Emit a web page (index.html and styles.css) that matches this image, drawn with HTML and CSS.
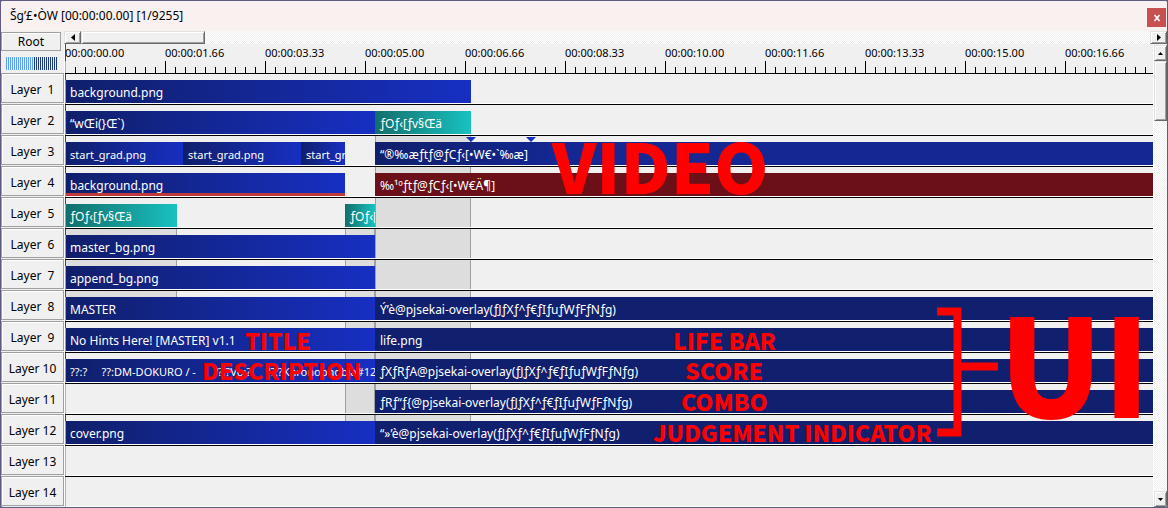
FILE: index.html
```html
<!DOCTYPE html>
<html lang="en">
<head>
<meta charset="utf-8">
<title>Timeline</title>
<link rel="stylesheet" href="styles.css">
</head>
<body>
<div class="window">
  <header class="titlebar">
    <span class="title">Šg’£•ÒW [00:00:00.00] [1/9255]</span>
    <button class="close" aria-label="Close"><svg width="8" height="8" viewBox="0 0 8 8"><path d="M1.500 1L6.500 7M6.500 1L1.500 7" stroke="#fff" stroke-width="1.600"/></svg></button>
  </header>
  <div class="body">
    <aside class="side">
      <button class="root">Root</button>
      <div class="zoombar"></div>
      <button class="layer">Layer  1</button>
      <button class="layer">Layer  2</button>
      <button class="layer">Layer  3</button>
      <button class="layer">Layer  4</button>
      <button class="layer">Layer  5</button>
      <button class="layer">Layer  6</button>
      <button class="layer">Layer  7</button>
      <button class="layer">Layer  8</button>
      <button class="layer">Layer  9</button>
      <button class="layer">Layer 10</button>
      <button class="layer">Layer 11</button>
      <button class="layer">Layer 12</button>
      <button class="layer">Layer 13</button>
      <button class="layer">Layer 14</button>
    </aside>
    <main class="main">
      <div class="hscroll">
        <button class="sb sb-h" aria-label="Scroll left"><svg width="4" height="7" viewBox="0 0 4 7"><path d="M4 0v7L0 3.500z"/></svg></button>
        <div class="thumb-h"></div>
        <button class="sb sb-h end-h" aria-label="Scroll right"><svg width="4" height="7" viewBox="0 0 4 7"><path d="M0 0v7L4 3.500z"/></svg></button>
      </div>
      <div class="content">
        <div class="timeline">
          <div class="ruler">
            <span>00:00:00.00</span><span>00:00:01.66</span><span>00:00:03.33</span><span>00:00:05.00</span><span>00:00:06.66</span><span>00:00:08.33</span><span>00:00:10.00</span><span>00:00:11.66</span><span>00:00:13.33</span><span>00:00:15.00</span><span>00:00:16.66</span>
          </div>
          <div class="lanes">
            <div class="row"><i class="cur"></i><div class="clip blue intro-fade">background.png</div></div>
            <div class="row"><i class="cur"></i><div class="clip blue intro">“wŒi(}Œ`)</div><div class="clip teal fade">ƒOƒ‹[ƒv§Œä</div></div>
            <div class="row"><i class="cur"></i><i class="band b3"></i><div class="clip blue compact s1">start_grad.png</div><div class="clip blue compact s2">start_grad.png</div><div class="clip blue compact s3">start_grad.png</div><div class="clip video rest">“®‰æƒtƒ@ƒCƒ‹[•W€•`‰æ]</div>
              <svg class="key" width="70" height="5" viewBox="0 0 70 5"><path d="M0 0h10L5 5zM60 0h10L65 5z" fill="#1730c0"/></svg></div>
            <div class="row"><i class="cur"></i><i class="band b3"></i><div class="clip blue s123 selected">background.png</div><div class="clip audio rest">‰¹ºƒtƒ@ƒCƒ‹[•W€Ä¶]</div></div>
            <div class="row"><i class="cur"></i><i class="band b3"></i><div class="clip teal g1">ƒOƒ‹[ƒv§Œä</div><div class="clip teal g2">ƒOƒ‹[ƒv§Œä</div></div>
            <div class="row"><i class="cur"></i><i class="band b1"></i><i class="band b2"></i><i class="band b3"></i><div class="clip blue intro">master_bg.png</div></div>
            <div class="row"><i class="cur"></i><i class="band b1"></i><i class="band b2"></i><i class="band b3"></i><div class="clip blue intro">append_bg.png</div></div>
            <div class="row"><i class="cur"></i><i class="band b1"></i><i class="band b2"></i><i class="band b3"></i><div class="clip blue intro">MASTER</div><div class="clip navy rest">Ý’è@pjsekai-overlay(ƒJƒXƒ^ƒ€ƒIƒuƒWƒFƒNƒg)</div></div>
            <div class="row"><i class="cur"></i><i class="band b2"></i><i class="band b3"></i><div class="clip blue intro">No Hints Here! [MASTER] v1.1</div><div class="clip navy rest">life.png</div></div>
            <div class="row"><i class="cur"></i><i class="band b2"></i><i class="band b3"></i><div class="clip blue compact intro">??:?     ??:DM-DOKURO / -      ??:?Vo:?     ??:?Khronophobia#12</div><div class="clip navy rest">ƒXƒRƒA@pjsekai-overlay(ƒJƒXƒ^ƒ€ƒIƒuƒWƒFƒNƒg)</div></div>
            <div class="row"><i class="cur idle"></i><i class="band b2"></i><i class="band b3"></i><div class="clip navy rest">ƒRƒ“ƒ{@pjsekai-overlay(ƒJƒXƒ^ƒ€ƒIƒuƒWƒFƒNƒg)</div></div>
            <div class="row"><i class="cur"></i><i class="band b2"></i><i class="band b3"></i><div class="clip blue intro">cover.png</div><div class="clip navy rest">“»’è@pjsekai-overlay(ƒJƒXƒ^ƒ€ƒIƒuƒWƒFƒNƒg)</div></div>
            <div class="row"><i class="cur idle"></i></div>
            <div class="row"><i class="cur idle"></i></div>
            <div class="note large n-video">VIDEO</div>
            <div class="note n-title">TITLE</div>
            <div class="note n-desc">DESCRIPTION</div>
            <div class="note n-life">LIFE BAR</div>
            <div class="note n-score">SCORE</div>
            <div class="note n-combo">COMBO</div>
            <div class="note n-judge">JUDGEMENT INDICATOR</div>
            <svg class="bracket" width="61" height="130" viewBox="0 0 61 130"><path d="M0 4.500H20.500V125.500H0M20.500 59.500H61" fill="none" stroke="#f00" stroke-width="8"/></svg>
            <div class="note huge n-ui">UI</div>
          </div>
        </div>
        <div class="vscroll">
          <button class="sb sb-v" aria-label="Scroll up"><svg width="5" height="3" viewBox="0 0 5 3"><path d="M0 3h5L2.500 0z"/></svg></button>
          <div class="thumb-v"></div>
          <button class="sb sb-v end-v" aria-label="Scroll down"><svg width="5" height="3" viewBox="0 0 5 3"><path d="M0 0h5L2.500 3z"/></svg></button>
        </div>
      </div>
    </main>
  </div>
</div>
</body>
</html>
```
FILE: styles.css
```css
* { box-sizing: border-box; }
body { margin: 0; font: 12px/16px "Noto Sans", "Open Sans", sans-serif; color: #000; background: #5f5a82; }
button { font: inherit; color: inherit; margin: 0; padding: 0; border-radius: 0; }
.window { height: 100vh; border: 1px solid #5f5a82; border-radius: 3px; background: #f0f0f0; display: flex; flex-direction: column; overflow: hidden; }

.titlebar { flex: none; height: 30px; background: #f9f0f0; display: flex; align-items: center; justify-content: space-between; padding: 0 1px 0 9px; }
.close { width: 19px; height: 19px; margin-top: 3px; border: 0; background: #c75050; display: flex; align-items: center; justify-content: center; }

.body { flex: 1; min-height: 0; display: flex; }
.side { flex: none; width: 63px; display: flex; flex-direction: column; }
.root, .layer { flex: none; border: 1px solid #a0a0a0; background: #f0f0f0; box-shadow: inset 1px 1px #fff; white-space: pre; }
.root { width: 60px; height: 19px; margin-top: 1px; }
.zoombar { flex: none; width: 51px; height: 13px; margin: 6px 0 3px 5px; background: repeating-linear-gradient(90deg, transparent 0 1px, #f0f0f0 1px 2px), linear-gradient(90deg, #5c9df5 0 28px, #1c3a78 28px); }
.layer { height: 30px; margin-bottom: 1px; padding-top: 3px; }

.main { flex: 1; min-width: 0; display: flex; flex-direction: column; }
.hscroll, .vscroll { background: repeating-conic-gradient(#fff 0 25%, #efefef 0 50%) 0 0 / 2px 2px; display: flex; flex: none; }
.hscroll { height: 13px; }
.sb, .thumb-h, .thumb-v { flex: none; background: #f0f0f0; border: 1px solid; border-color: #e3e3e3 #696969 #696969 #e3e3e3; box-shadow: inset 1px 1px #fff, inset -1px -1px #a0a0a0; display: flex; align-items: center; justify-content: center; }
.sb-h { width: 17px; height: 13px; }
.thumb-h { width: 124px; }
.end-h { margin-left: auto; }
.content { flex: 1; min-height: 0; display: flex; }
.vscroll { width: 13px; flex-direction: column; padding-top: 1px; }
.sb-v { width: 13px; height: 16px; }
.thumb-v { height: 60px; }
.end-v { margin-top: auto; }

.timeline { flex: 1; min-width: 0; border: solid #fff; border-width: 0 1px; overflow: hidden; }
.ruler {
  height: 30px; display: flex; overflow: hidden; border-bottom: 1px solid #000; font-size: 11px; line-height: 18px;
  background:
    linear-gradient(#e00, #e00) 0 0 / 1px 17px no-repeat,
    linear-gradient(#0ff, #0ff) 0 17px / 1px 12px no-repeat,
    repeating-linear-gradient(90deg, #000 0 1px, transparent 1px 100px) 0 17px / 100% 12px no-repeat,
    repeating-linear-gradient(90deg, #000 0 1px, transparent 1px 10px) 0 23px / 100% 6px no-repeat;
}
.ruler span { flex: none; width: 100px; }

.lanes { position: relative; }
.row {
  position: relative; height: 31px; border-bottom: 1px solid #000; display: grid;
  grid-template-columns: 1px 111px 6px 118px 44px 30px 96px 1fr;
  background: linear-gradient(#fff, #fff) bottom / 100% 1px no-repeat #f0f0f0;
}
.row > * { grid-row: 1; }
.cur { grid-column: 1; background: linear-gradient(#e00 6px, #20dca0 6px); }
.cur.idle { background: #0ff; }
.band { background: #ddd; border: solid #a0a0a0; border-width: 0 1px; margin-bottom: 1px; }
.b1 { grid-column: 2; border-left: 0; }
.b2 { grid-column: 6; }
.b3 { grid-column: 7; }
.clip { height: 23px; margin-top: 6px; padding: 5px 0 0 4px; color: #fff; white-space: pre; overflow: hidden; min-width: 0; }
.blue { background: linear-gradient(90deg, #101f6b, #172fc2); }
.teal { background: linear-gradient(90deg, #126e6c, #18c2c0); }
.navy { background: #101f6e; }
.video { background: linear-gradient(90deg, #101f6b, #142793 180px); }
.audio { background: #6b1018; }
.selected { border-bottom: 3px solid #bf3b3b; }
.compact { font-size: 11px; }
.intro-fade { grid-column: 2 / 8; }
.intro { grid-column: 2 / 7; }
.fade { grid-column: 7; }
.s1 { grid-column: 2 / 4; }
.s2 { grid-column: 4; }
.s3 { grid-column: 5; }
.s123 { grid-column: 2 / 6; }
.rest { grid-column: 7 / 9; }
.g1 { grid-column: 2; }
.g2 { grid-column: 6; }
.rest, .fade, .s2, .s3, .g2 { padding-left: 5px; }
.key { position: absolute; left: 401px; top: 1px; }

.note { position: absolute; color: #f00; font: 900 23px/24px "Noto Sans CJK JP", sans-serif; white-space: nowrap; }
.note.large { font-size: 69px; line-height: 68px; }
.note.huge { font-size: 136px; line-height: 136px; }
.n-video { left: 487px; top: 56px; }
.n-title { left: 180px; top: 254px; }
.n-desc { left: 137px; top: 284px; }
.n-life { left: 608px; top: 254px; }
.n-score { left: 620px; top: 284px; }
.n-combo { left: 616px; top: 315px; }
.n-judge { left: 588px; top: 346px; }
.n-ui { left: 934px; top: 217px; }
.bracket { position: absolute; left: 872px; top: 233px; }
```
